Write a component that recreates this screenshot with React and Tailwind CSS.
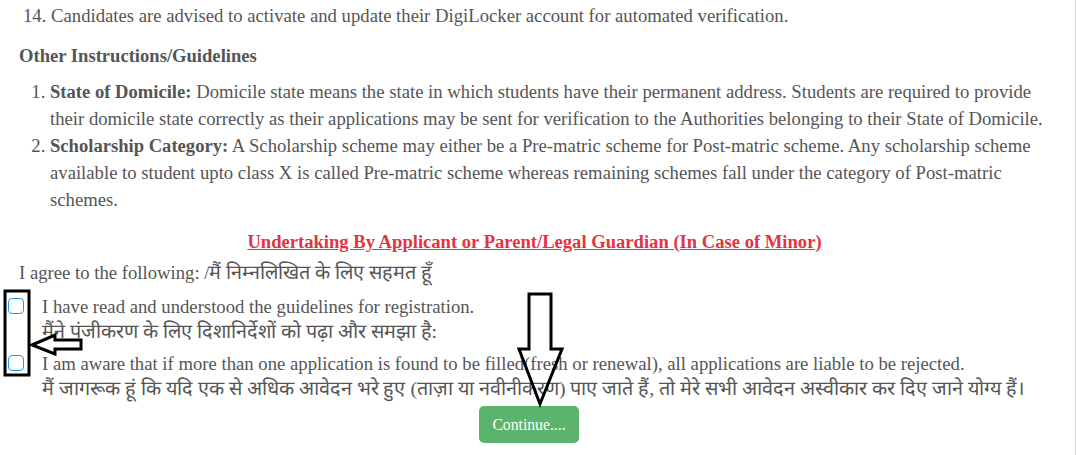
import { useState } from 'react';

const Check = ({ checked, onChange }) => (
    <button
        type="button"
        onClick={onChange}
        className={`w-[16px] h-[16px] mt-[3px] shrink-0 rounded-[4px] border border-[#2196f3] ${checked ? 'bg-[#2196f3]' : 'bg-white'}`}
    />
);

const Hi = ({ children }) => <span className="text-[19.8px]">{children}</span>;

const App = () => {
    const [agree, setAgree] = useState([false, false]);
    const toggle = (i) => setAgree(a => a.map((v, j) => (j === i ? !v : v)));

    return (
        <div className="relative w-[1076px] h-[455px] overflow-hidden bg-white border-r border-[#d3d3d3] font-['Liberation_Serif',serif] text-[18.7px] text-[#555]">
            <p className="pl-[23px] pt-[3px] leading-[26px]">
                14. Candidates are advised to activate and update their DigiLocker account for automated verification.
            </p>

            <h4 className="pl-[19px] mt-[14px] leading-[26px] font-bold text-[18.6px]">Other Instructions/Guidelines</h4>

            <ol className="list-decimal pl-[50px] pr-[26px] mt-[9px] leading-[27px]">
                <li>
                    <b className="text-[18.6px]">State of Domicile:</b> Domicile state means the state in which students have their permanent address. Students are required to provide their domicile state correctly as their applications may be sent for verification to the Authorities belonging to their State of Domicile.
                </li>
                <li>
                    <b className="text-[18.6px]">Scholarship Category:</b> A Scholarship scheme may either be a Pre-matric scheme for Post-matric scheme. Any scholarship scheme available to student upto class X is called Pre-matric scheme whereas remaining schemes fall under the category of Post-matric schemes.
                </li>
            </ol>

            <h4 className="mt-[16px] leading-[26px] text-center font-bold text-[18.6px] text-[#e2343f] underline pr-[6px]">
                Undertaking By Applicant or Parent/Legal Guardian (In Case of Minor)
            </h4>

            <p className="pl-[19px] mt-[4px] leading-[26px]">I agree to the following: /<Hi>मैं निम्नलिखित के लिए सहमत हूँ</Hi></p>

            <div className="flex gap-[18px] pl-[8px] mt-[9px] leading-[24px]">
                <Check checked={agree[0]} onChange={() => toggle(0)} />
                <div>
                    <div>I have read and understood the guidelines for registration.</div>
                    <div><Hi>मैंने पंजीकरण के लिए दिशानिर्देशों को पढ़ा और समझा है:</Hi></div>
                </div>
            </div>

            <div className="flex gap-[18px] pl-[8px] mt-[8px] leading-[24px]">
                <Check checked={agree[1]} onChange={() => toggle(1)} />
                <div>
                    <div>I am aware that if more than one application is found to be filled(fresh or renewal), all applications are liable to be rejected.</div>
                    <div><Hi>मैं जागरूक हूं कि यदि एक से अधिक आवेदन भरे हुए (ताज़ा या नवीनीकरण) पाए जाते हैं, तो मेरे सभी आवेदन अस्वीकार कर दिए जाने योग्य हैं।</Hi></div>
                </div>
            </div>

            <button
                type="button"
                className="block ml-[479px] mt-[5px] w-[100px] h-[37px] rounded-[5px] bg-[#5cb46c] text-white text-[15.7px]"
            >
                Continue....
            </button>

            {/* annotation marks drawn over the form */}
            <svg className="absolute inset-0 pointer-events-none" width="1076" height="455" fill="none" stroke="#000" strokeWidth="3">
                <rect x="5" y="291" width="24" height="84" />
                <polygon points="32,345 55,335 55,340 81,340 81,349 55,349 55,354" strokeLinejoin="miter" />
                <polygon points="529,294 551,294 551,349 562,349 540,404 519,349 529,349" strokeLinejoin="miter" />
            </svg>
        </div>
    );
};

export default App;
